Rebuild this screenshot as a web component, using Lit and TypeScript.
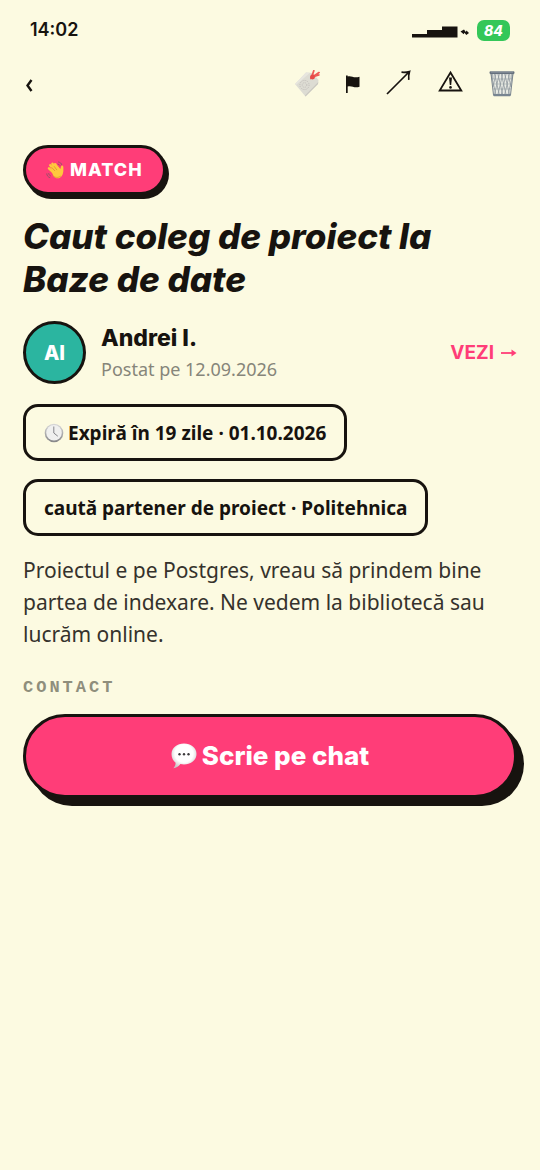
import { LitElement, html, svg, css } from "lit";
import { customElement } from "lit/decorators.js";

const weave = [0, 1, 2, 3, 4, 5, 6];

@customElement("app-root")
export class AppRoot extends LitElement {
  static styles = css`
    :host {
      --ink: #17130f;
      --paper: #fcfae1;
      --pink: #ff3d78;
      --display: "Inter", sans-serif;
      --body: "Noto Sans", sans-serif;
      display: block;
      min-height: 100vh;
      background: var(--paper);
      color: var(--ink);
      font-family: var(--body);
    }
    * { box-sizing: border-box; }
    svg { display: block; }
    button {
      border: 0;
      padding: 0;
      margin: 0;
      background: none;
      color: inherit;
      font: inherit;
      cursor: pointer;
    }
    h1, h2, p { margin: 0; }
    .status {
      display: flex;
      align-items: center;
      justify-content: space-between;
      height: 60px;
      padding: 0 30px;
      font: 600 18px/24px var(--display);
    }
    .signals { display: flex; align-items: center; gap: 8px; }
    .battery {
      width: 33px;
      border-radius: 7px;
      background: #34c759;
      color: #fff;
      font: italic 800 14px/21px var(--display);
      text-align: center;
    }
    .toolbar {
      display: flex;
      align-items: center;
      justify-content: space-between;
      height: 46px;
      padding: 0 25px 0 24px;
    }
    .actions { display: flex; align-items: center; gap: 26px; }
    main {
      display: flex;
      flex-direction: column;
      align-items: flex-start;
      padding: 39px 23px 24px;
    }
    .match {
      display: flex;
      align-items: center;
      gap: 5px;
      height: 50px;
      padding: 0 20px;
      border: 3px solid var(--ink);
      border-radius: 25px;
      background: var(--pink);
      box-shadow: 3px 4px 0 var(--ink);
      color: #fff;
      font: 800 18px/24px var(--display);
      letter-spacing: 1px;
    }
    h1 {
      margin-top: 20px;
      font: italic 800 35px/43px var(--display);
    }
    .author {
      display: flex;
      align-items: center;
      gap: 15px;
      width: 100%;
      margin-top: 20px;
    }
    .avatar {
      display: grid;
      place-items: center;
      width: 63px;
      height: 63px;
      border: 3px solid var(--ink);
      border-radius: 50%;
      background: #2bb5a0;
      color: #fff;
      font: 800 20px/24px var(--display);
    }
    .who { flex: 1; }
    .name { font: 800 23px/32px var(--display); }
    .posted { color: #86857a; font-size: 18px; line-height: 30px; }
    .view {
      display: flex;
      align-items: center;
      gap: 7px;
      color: var(--pink);
      font: 700 19px/24px var(--display);
      text-decoration: none;
    }
    .tag {
      display: flex;
      align-items: center;
      gap: 4px;
      min-height: 57px;
      padding: 0 18px;
      border: 3px solid var(--ink);
      border-radius: 15px;
      font-size: 19px;
      line-height: 24px;
      font-weight: 700;
    }
    .tags {
      display: flex;
      flex-direction: column;
      align-items: flex-start;
      gap: 18px;
      margin-top: 20px;
    }
    .text { margin-top: 18px; font-size: 21px; line-height: 32px; color: #35322c; }
    h2 {
      margin-top: 28px;
      color: #8f8e7c;
      font: 700 17px/20px "Liberation Mono", monospace;
      letter-spacing: 3px;
    }
    .chat {
      display: flex;
      align-items: center;
      justify-content: center;
      gap: 5px;
      width: 100%;
      height: 84px;
      margin-top: 16px;
      border: 3px solid var(--ink);
      border-radius: 42px;
      background: var(--pink);
      box-shadow: 7px 8px 0 var(--ink);
      color: #fff;
      font: 800 26px/32px var(--display);
    }
  `;

  private backIcon() {
    return svg`<svg width="10" height="20" viewBox="0 0 10 20" fill="none" stroke="currentColor" stroke-width="2.4"><path d="M7.5 7 3.500 12.500 7.500 18"/></svg>`;
  }

  private signalIcon() {
    return svg`<svg width="57" height="16" viewBox="0 0 57 16" fill="currentColor">
      <path d="M0 12h15V8h15V4.500h15.500V15.500H0z"/>
      <path d="M48.500 9.500 52 7.500l1.800 2.400.7-1.400L57 11l-2.700 2-1.800-2.300-.8 1.500z"/></svg>`;
  }

  private labelIcon() {
    return svg`<svg width="26" height="27" viewBox="0 0 26 27">
      <path d="M1 14 12 2.5 18.5 3 24.5 10 24 14 11.5 26.5z" fill="#dddcd3"/>
      <path d="M1 14 12 2.5l4 .3L2 15z" fill="#e8e6df"/>
      <path d="M11.5 26.5 24 14l.3-2L11 25.5z" fill="#c9c7bf"/>
      <g fill="none" stroke="#bdb9b7" stroke-width=".9" stroke-dasharray="1 1">
        <circle cx="10.5" cy="15" r="4.6"/><circle cx="10.5" cy="15" r="2.3"/></g>
      <path d="M17 8.5c-.5-2 1.5-3.8 3.2-2.7M18 6 19.8.8M20 6 25 2.6M20 6.5 24.8 5" fill="none" stroke="#ee5a55" stroke-width="1.8" stroke-linecap="round"/>
      <circle cx="18.6" cy="7" r="2.4" fill="#e74a48"/></svg>`;
  }

  private flagIcon() {
    return svg`<svg width="14" height="24" viewBox="0 0 14 24" fill="currentColor"><path d="M0 4.500h1.700v1c3.800-1.300 5.600 2 11.800.2v10C8.200 17.500 5.800 14.200 1.700 15.500V22H0z"/></svg>`;
  }

  private arrowIcon() {
    return svg`<svg width="26" height="26" viewBox="0 0 26 26" fill="none" stroke="currentColor" stroke-width="1.700"><path d="M1 24 23.500 1.500M15.500 2.200c3 .3 5.500.1 8-.7-.8 2.500-1 5.500-.7 8.300"/></svg>`;
  }

  private warningIcon() {
    return svg`<svg width="25" height="26" viewBox="0 0 25 26"><path d="M12.500 2.500 23.300 20.500H1.700z" fill="none" stroke="currentColor" stroke-width="1.800"/><path d="M11 7.500h3l-.8 7.500h-1.400z" fill="currentColor"/><circle cx="12.500" cy="17.400" r="1.300" fill="currentColor"/></svg>`;
  }

  private binIcon() {
    return svg`<svg width="26" height="27" viewBox="0 0 26 27">
      <path d="M1.500 2.500h23L21.500 25.500h-17z" fill="#e9ebe4"/>
      <g fill="none" stroke="#8f989e" stroke-width=".8">
        ${weave.map((i) => svg`<path d=${`M${2 + i * 3.4} 3.500 ${Math.min(22, 7 + i * 3.4)} ${i < 5 ? 25 : 25 - (i - 4) * 8}M${24 - i * 3.4} 3.500 ${Math.max(4, 19 - i * 3.4)} ${i < 5 ? 25 : 25 - (i - 4) * 8}`}/>`)}
        <path d="M3 9h20M3.500 14h19M4 19h18" stroke-width=".5"/>
      </g>
      <path d="M2 3.500 4.500 25M24 3.500 21.500 25" stroke="#7b858e" stroke-width="1"/>
      <rect x=".5" y="1.200" width="25" height="2.800" rx="1.200" fill="#66717d"/>
      <path d="M2 2h22" stroke="#a9b2b9" stroke-width=".7"/>
      <rect x="4.200" y="24" width="17.600" height="2.200" rx="1" fill="#788591"/></svg>`;
  }

  private waveIcon() {
    return svg`<svg width="19" height="19" viewBox="0 0 19 19">
      <g stroke="#ffc83d" stroke-width="2.500" stroke-linecap="round">
        <path d="M8.500 9.500 4.300 4.300M10 8 6.500 2.900M11.500 7.500 9.200 3.200M7 11 3 7.300"/></g>
      <path d="M5.200 9.800 11.500 4.600l2.800 3.500c.8-1.200.3-3.300 1.700-3.600 1.400-.2 1.400 1.500 1.400 3 .2 4.500-.8 7.700-3.500 9.200-2.500 1.300-4.800.2-6.400-1.800z" fill="#ffc83d"/>
      <path d="M5.500 6.200 9 10M8 5.200l3 3.900M6.500 14.300c2.500 2.600 5.500 2.800 8.300.7" fill="none" stroke="#dc952d" stroke-width=".8"/>
      <path d="M12.500 1c1.800.3 2.900 1.300 3.300 2.700M12 3.100c.9.100 1.500.6 1.900 1.300M.8 12.800c.1 2 1.200 3.200 3 3.800M2.700 12.500c.1 1.200.8 1.900 1.700 2.300" fill="none" stroke="#9a5268" stroke-width="1" stroke-linecap="round"/></svg>`;
  }

  private clockIcon() {
    return svg`<svg width="20" height="20" viewBox="0 0 20 20">
      <defs><linearGradient id="rim" x1="0" y1="0" x2="0" y2="1"><stop offset="0" stop-color="#d9d9d9"/><stop offset="1" stop-color="#858587"/></linearGradient></defs>
      <circle cx="10" cy="10" r="9.300" fill="url(#rim)"/><circle cx="10" cy="9.700" r="7.800" fill="#f0f0ef"/>
      <path d="M9.800 3.500V10l4 3.200" fill="none" stroke="#85858a" stroke-width="1"/></svg>`;
  }

  private bubbleIcon() {
    return svg`<svg width="26" height="26" viewBox="0 0 26 26">
      <defs><radialGradient id="puff" cx=".5" cy=".4" r=".6"><stop offset=".6" stop-color="#fff"/><stop offset="1" stop-color="#c9c6c8"/></radialGradient></defs>
      <path d="M13 .6C20 .6 25.500 5 25.500 11S20 21.500 13 21.500c-1.300 0-2.500-.1-3.600-.4C7.500 23.500 5 25 2.300 25.300c1.400-1.500 2.300-3.300 2.300-5.600C2 17.700.5 14.600.5 11 .5 5 6 .6 13 .6z" fill="url(#puff)"/>
      <g fill="#3c3a3c"><circle cx="8.500" cy="11.300" r="1.200"/><circle cx="13" cy="11.300" r="1.200"/><circle cx="17.500" cy="11.300" r="1.200"/></g></svg>`;
  }

  render() {
    return html`
      <div class="status">
        <span>14:02</span>
        <div class="signals">${this.signalIcon()}<span class="battery">84</span></div>
      </div>
      <nav class="toolbar">
        <button aria-label="Înapoi">${this.backIcon()}</button>
        <div class="actions">
          <button aria-label="Etichetă">${this.labelIcon()}</button>
          <button aria-label="Marchează">${this.flagIcon()}</button>
          <button aria-label="Distribuie">${this.arrowIcon()}</button>
          <button aria-label="Raportează">${this.warningIcon()}</button>
          <button aria-label="Șterge">${this.binIcon()}</button>
        </div>
      </nav>
      <main>
        <div class="match">${this.waveIcon()}<span>MATCH</span></div>
        <h1>Caut coleg de proiect la Baze de date</h1>
        <div class="author">
          <div class="avatar">AI</div>
          <div class="who">
            <div class="name">Andrei I.</div>
            <div class="posted">Postat pe 12.09.2026</div>
          </div>
          <a class="view" href="#">VEZI
            <svg width="16" height="12" viewBox="0 0 16 12" fill="none" stroke="currentColor" stroke-width="1.800"><path d="M0 6h14"/><path d="M10.500 2.500 15.500 6l-5 3.500z" fill="currentColor" stroke="none"/></svg>
          </a>
        </div>
        <div class="tags">
          <div class="tag">${this.clockIcon()}<span>Expiră în 19 zile · 01.10.2026</span></div>
          <div class="tag">caută partener de proiect · Politehnica</div>
        </div>
        <p class="text">Proiectul e pe Postgres, vreau să prindem bine partea de indexare. Ne vedem la bibliotecă sau lucrăm online.</p>
        <h2>CONTACT</h2>
        <button class="chat">${this.bubbleIcon()}<span>Scrie pe chat</span></button>
      </main>
    `;
  }
}
